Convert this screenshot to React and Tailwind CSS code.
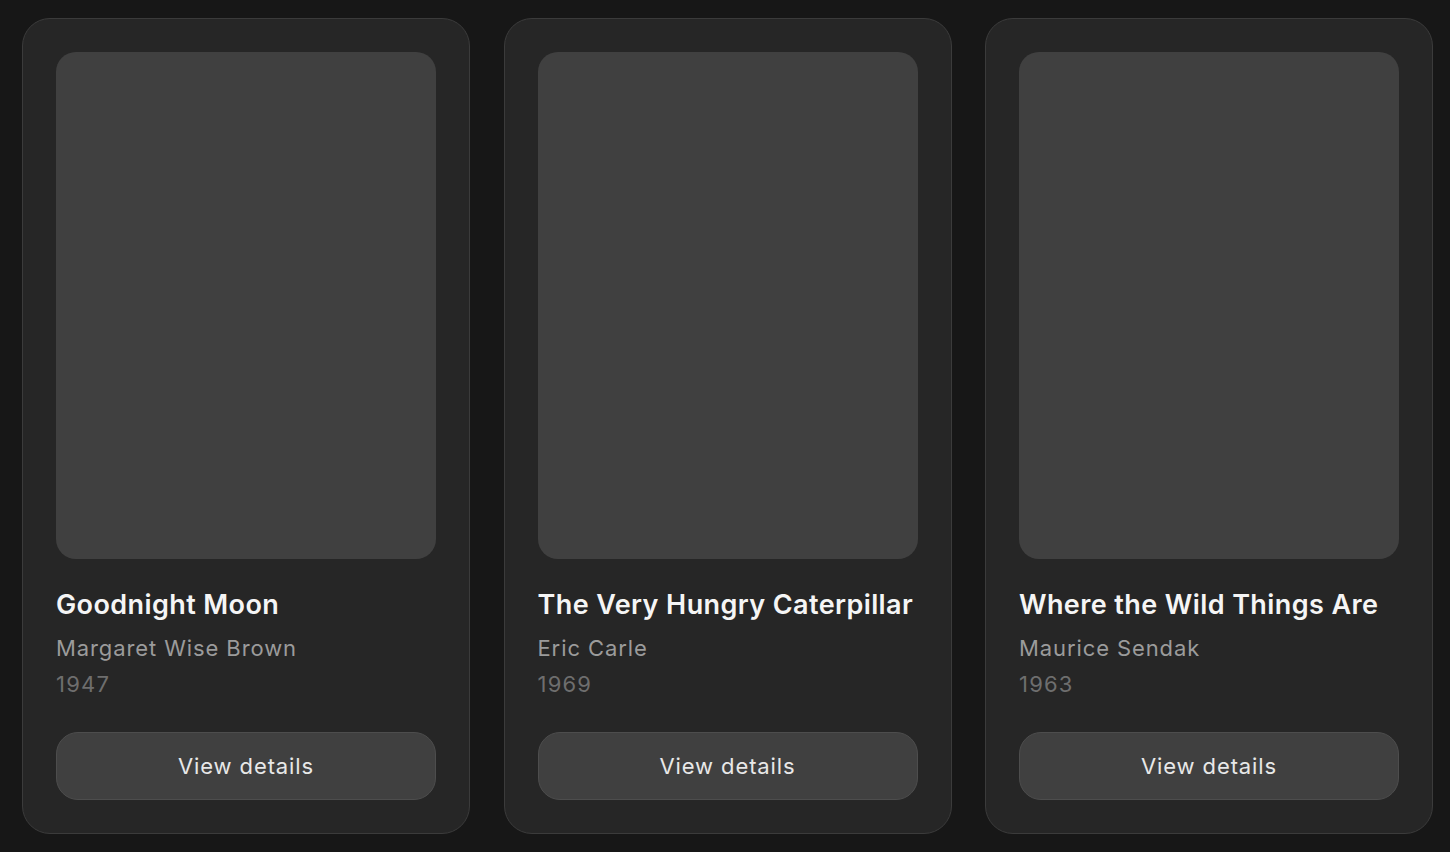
export default function App() {
  const books = [
    { title: "Goodnight Moon", author: "Margaret Wise Brown", year: "1947" },
    { title: "The Very Hungry Caterpillar", author: "Eric Carle", year: "1969" },
    { title: "Where the Wild Things Are", author: "Maurice Sendak", year: "1963" },
  ];
  return (
    <div className="w-[1450px] h-[852px] overflow-hidden bg-[#171717] pl-[22px] pt-[18px]" style={{ fontFamily: "Inter, 'Noto Sans', sans-serif" }}>
      <div className="flex gap-[33.5px]">
        {books.map((b) => (
          <div key={b.title} className="w-[448px] shrink-0 h-[816px] rounded-[28px] border border-[#3b3b3b] bg-[#262626] px-[33px] pt-[33px] flex flex-col">
            <div className="h-[507px] rounded-[20px] bg-[#404040]" />
            <div className="mt-[30px] text-[27px] leading-[32px] font-semibold text-[#f5f5f5] whitespace-nowrap tracking-[0.4px]">{b.title}</div>
            <div className="mt-[12px] text-[22px] leading-[30px] text-[#9b9b9b] tracking-[0.9px]">{b.author}</div>
            <div className="mt-[6px] text-[22px] leading-[30px] text-[#6e6e6e] tracking-[1.2px]">{b.year}</div>
            <button className="mt-[33px] h-[68px] w-full rounded-[22px] border border-[#4d4d4d] bg-[#404040] text-[22px] text-[#e8e8e8] tracking-[0.9px]">View details</button>
          </div>
        ))}
      </div>
    </div>
  );
}
